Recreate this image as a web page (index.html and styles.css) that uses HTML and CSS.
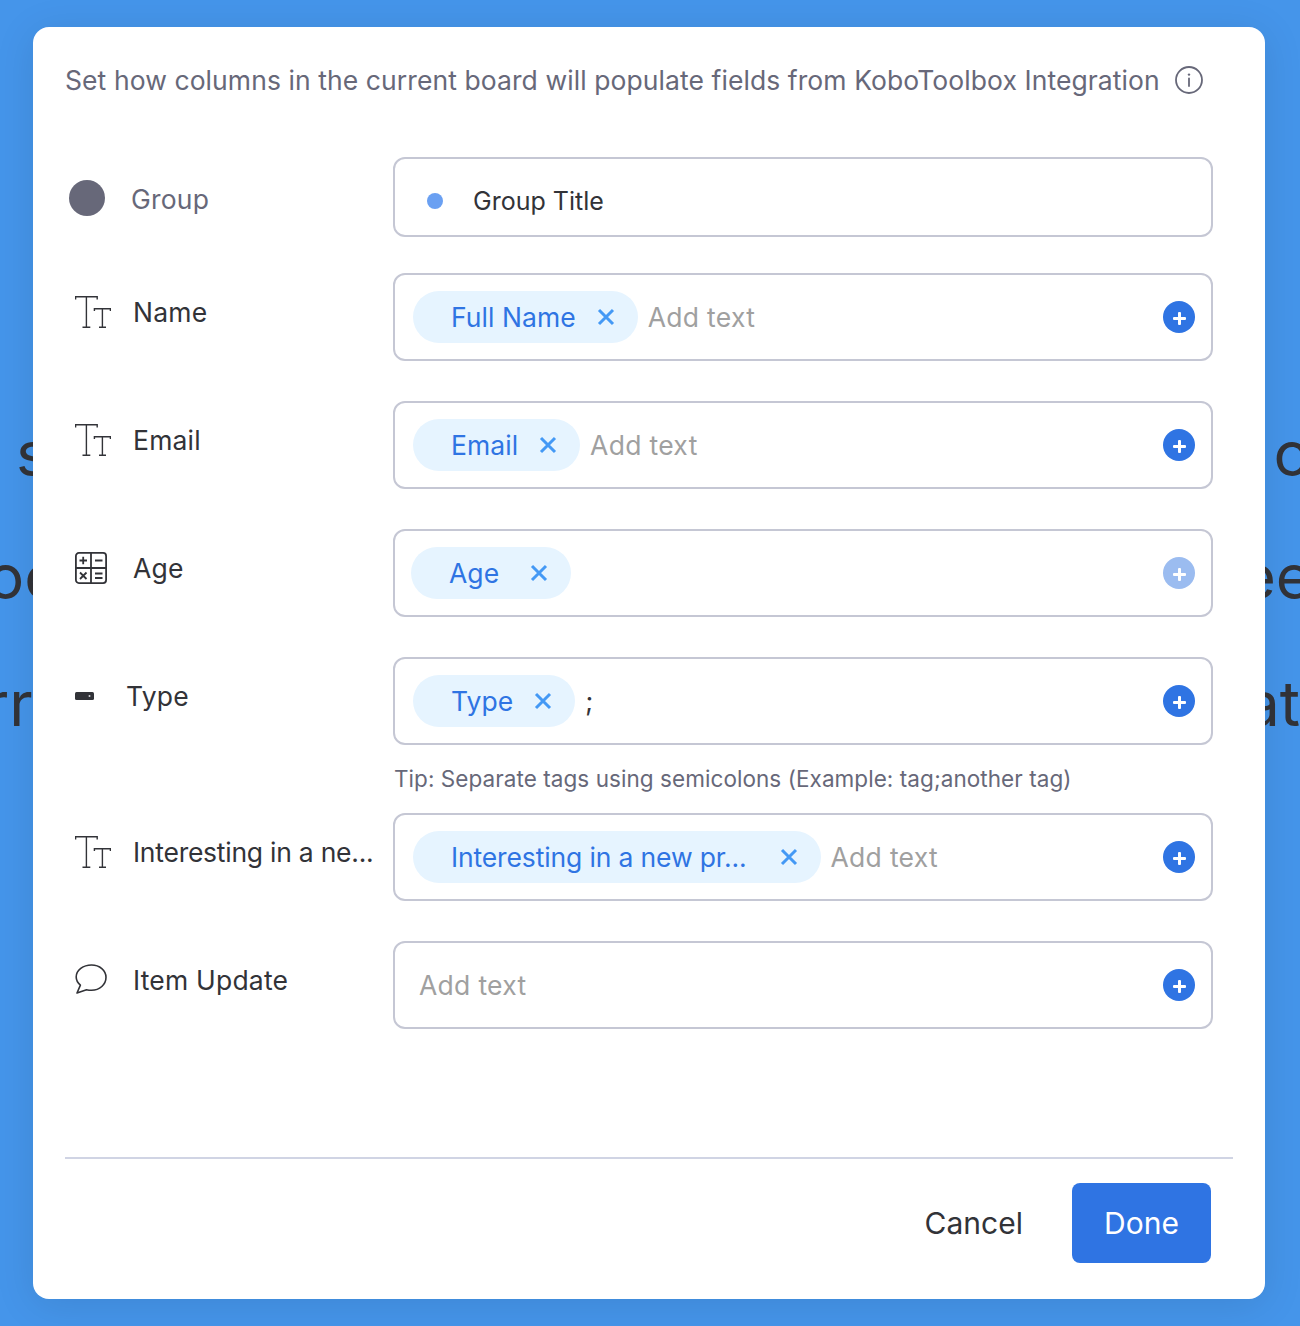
FILE: index.html
```html
<!DOCTYPE html>
<html lang="en">
<head>
<meta charset="utf-8">
<title>KoboToolbox Integration</title>
<link rel="stylesheet" href="styles.css">
</head>
<body>
<div class="backdrop">
  <div class="bg-line bg-line-1"><span class="bg-l">s</span><span class="bg-r">c</span></div>
  <div class="bg-line bg-line-2"><span class="bg-l">oo</span><span class="bg-r">ee</span></div>
  <div class="bg-line bg-line-3"><span class="bg-l">rr</span><span class="bg-r">at</span></div>
</div>
<main class="modal">
  <header class="head">
    <p class="title">Set how columns in the current board will populate fields from KoboToolbox Integration</p>
    <svg class="info" viewBox="0 0 28 28"><circle cx="14" cy="14" r="13" fill="none" stroke="#676879" stroke-width="1.8"/><circle cx="14" cy="8.6" r="1.2" fill="#676879"/><path d="M14 12.5v7.5" stroke="#676879" stroke-width="1.8" stroke-linecap="round"/></svg>
  </header>
  <section class="rows">
    <div class="row row-group">
      <div class="label label-group"><span class="group-dot"></span><span class="group-text">Group</span></div>
      <div class="field field-group"><span class="blue-dot"></span><span class="group-title">Group Title</span></div>
    </div>
    <div class="row">
      <div class="label"><svg class="ic ic-tt" viewBox="0 0 36 32"><path d="M.6 3.5V.7h21.6v2.8M11.4.7v30.6M7.5 31.3h7.8M19.4 15V12.7h16v2.3M27.4 12.7v18.6M24 31.3h7" fill="none" stroke="#323338" stroke-width="1.4"/></svg><span>Name</span></div>
      <div class="field"><span class="chip"><span class="chip-text">Full Name</span><svg class="x" viewBox="0 0 18 18"><path d="M2 2l14 14M16 2L2 16"/></svg></span><span class="ph">Add text</span><span class="plus"></span></div>
    </div>
    <div class="row">
      <div class="label"><svg class="ic ic-tt" viewBox="0 0 36 32"><path d="M.6 3.5V.7h21.6v2.8M11.4.7v30.6M7.5 31.3h7.8M19.4 15V12.7h16v2.3M27.4 12.7v18.6M24 31.3h7" fill="none" stroke="#323338" stroke-width="1.4"/></svg><span>Email</span></div>
      <div class="field"><span class="chip"><span class="chip-text">Email</span><svg class="x" viewBox="0 0 18 18"><path d="M2 2l14 14M16 2L2 16"/></svg></span><span class="ph">Add text</span><span class="plus"></span></div>
    </div>
    <div class="row">
      <div class="label"><svg class="ic ic-calc" viewBox="0 0 32 32"><g fill="none" stroke="#323338" stroke-width="1.8"><rect x=".9" y=".9" width="30.2" height="30.2" rx="3"/><path d="M16 .9v30.200M.9 16h30.200"/><path d="M4.500 8.500h7.500M8.200 4.800v7.500M20 8.500h7.500M5 20.500l6.500 6.500M11.500 20.500L5 27M20 21.500h7.500M20 26h7.500"/></g></svg><span>Age</span></div>
      <div class="field field-age"><span class="chip"><span class="chip-text">Age</span><svg class="x x-age" viewBox="0 0 18 18"><path d="M2 2l14 14M16 2L2 16"/></svg></span><span class="plus plus-off"></span></div>
    </div>
    <div class="row">
      <div class="label"><svg class="ic ic-tag" viewBox="0 0 19 8"><rect width="19" height="8" rx="1.5" fill="#323338"/><circle cx="14.5" cy="4" r="1" fill="#d5d5dc"/></svg><span>Type</span></div>
      <div class="field-wrap">
        <div class="field"><span class="chip"><span class="chip-text">Type</span><svg class="x" viewBox="0 0 18 18"><path d="M2 2l14 14M16 2L2 16"/></svg></span><span class="semi">;</span><span class="plus"></span></div>
        <p class="tip">Tip: Separate tags using semicolons (Example: tag;another tag)</p>
      </div>
    </div>
    <div class="row row-tight">
      <div class="label"><svg class="ic ic-tt" viewBox="0 0 36 32"><path d="M.6 3.5V.7h21.6v2.8M11.4.7v30.6M7.5 31.3h7.8M19.4 15V12.7h16v2.3M27.4 12.7v18.6M24 31.3h7" fill="none" stroke="#323338" stroke-width="1.4"/></svg><span class="label-long">Interesting in a ne...</span></div>
      <div class="field"><span class="chip"><span class="chip-text chip-long">Interesting in a new pr...</span><svg class="x x-long" viewBox="0 0 18 18"><path d="M2 2l14 14M16 2L2 16"/></svg></span><span class="ph">Add text</span><span class="plus"></span></div>
    </div>
    <div class="row">
      <div class="label"><svg class="ic ic-chat" viewBox="0 0 32 30"><path d="M16.500 1C8.200 1 1.200 6.300 1.200 13c0 3.200 1.600 6 4.200 8.100L2 29l9.500-3.300c1.600.4 3.300.6 5 .6 8.200 0 14.500-5.800 14.500-13C31 6.300 24.700 1 16.500 1z" fill="none" stroke="#323338" stroke-width="1.600" stroke-linejoin="round"/></svg><span>Item Update</span></div>
      <div class="field field-empty"><span class="ph">Add text</span><span class="plus"></span></div>
    </div>
  </section>
  <footer class="foot">
    <button class="btn btn-cancel" type="button">Cancel</button>
    <button class="btn btn-done" type="button">Done</button>
  </footer>
</main>
</body>
</html>
```
FILE: styles.css
```css
* { box-sizing: border-box; }
html, body { margin: 0; height: 100%; }
body {
  position: relative;
  width: 1300px;
  height: 1326px;
  overflow: hidden;
  background: #4595ea;
  font-family: Inter, "Liberation Sans", sans-serif;
  color: #323338;
  padding: 27px 35px 27px 33px;
}
.backdrop { position: absolute; inset: 0; overflow: hidden; font-size: 62px; color: #323338; }
.bg-line { position: absolute; left: 0; right: 0; display: flex; justify-content: space-between; line-height: 80px; white-space: nowrap; }
.bg-line-1 { top: 414px; }
.bg-line-2 { top: 537px; }
.bg-line-3 { top: 664px; }
.bg-line-1 .bg-l { margin-left: 16px; }
.bg-line-1 .bg-r { margin-right: -9px; }
.bg-line-2 .bg-l { margin-left: -13px; }
.bg-line-2 .bg-r { margin-right: -12px; }
.bg-line-3 .bg-l { margin-left: -15px; }
.bg-line-3 .bg-r { margin-right: 0; }
.modal {
  position: relative;
  height: 1272px;
  background: #fff;
  border-radius: 16px;
  padding: 26px 32px 36px;
  display: flex;
  flex-direction: column;
  box-shadow: 0 6px 40px rgba(0, 0, 0, .1);
}
.head { display: flex; align-items: center; height: 54px; }
.title { margin: 0; font-size: 26.5px; color: #676879; white-space: nowrap; letter-spacing: .08px; }
.info { width: 28px; height: 28px; margin-left: 15px; flex: none; }
.rows { margin-top: 50px; display: flex; flex-direction: column; }
.row { display: grid; grid-template-columns: 328px 820px; margin-top: 40px; }
.row-group { margin-top: 0; }
.row-group + .row { margin-top: 36px; }
.row-tight { margin-top: 0; }
.label {
  display: flex;
  align-items: flex-start;
  padding: 23px 0 0 10px;
  font-size: 26.5px;
  line-height: 32px;
  letter-spacing: .2px;
  white-space: nowrap;
}
.label-long { letter-spacing: -.25px; }
.label-group { padding: 23px 0 0 4px; }
.group-dot { width: 36px; height: 36px; border-radius: 50%; background: #676879; flex: none; margin-right: 26px; }
.group-text { color: #676879; padding-top: 3px; }
.ic { flex: none; display: block; }
.ic-tt { width: 36px; height: 32px; margin-right: 22px; }
.ic-calc { width: 32px; height: 32px; margin: 0 26px 0 0; }
.ic-tag { width: 19px; height: 8px; margin: 12px 32px 0 0; }
.ic-chat { width: 32px; height: 30px; margin: 0 26px 0 0; }
.field {
  height: 88px;
  border: 2px solid #c5c7d4;
  border-radius: 12px;
  display: flex;
  align-items: center;
  padding: 0 16px 0 18px;
}
.field-group { height: 80px; padding: 8px 16px 0 32px; font-size: 25px; }
.field-age { padding-left: 16px; }
.field-empty { padding-left: 24px; }
.blue-dot { width: 16px; height: 16px; border-radius: 50%; background: #6aa0f2; margin-right: 30px; flex: none; }
.group-title { color: #323338; }
.chip {
  display: flex;
  align-items: center;
  height: 52px;
  border-radius: 26px;
  background: #e6f4ff;
  padding: 0 23px 0 38px;
  flex: none;
}
.chip-text { color: #2f74e3; font-size: 26.5px; letter-spacing: .05px; white-space: nowrap; }
.chip-long { letter-spacing: -.14px; }
.x { width: 18px; height: 18px; margin-left: 21px; flex: none; }
.x-long { margin-left: 33px; }
.x-age { margin-left: 31px; }
.x path { fill: none; stroke: #4499f5; stroke-width: 3; }
.ph { color: #a0a0a0; margin-left: 10px; font-size: 26.5px; letter-spacing: .3px; }
.field-empty .ph { margin-left: 0; }
.semi { margin-left: 10px; font-size: 26.5px; color: #323338; }
.plus {
  position: relative;
  margin-left: auto;
  width: 32px;
  height: 32px;
  border-radius: 50%;
  background: #2f74e3;
  flex: none;
}
.plus::before, .plus::after { content: ""; position: absolute; background: #fff; border-radius: 1px; }
.plus::before { left: 9.5px; top: 15.5px; width: 13px; height: 3px; }
.plus::after { left: 14.5px; top: 10.5px; width: 3px; height: 13px; }
.plus-off { background: #9bbcf0; }
.tip { margin: 18px 0 0 1px; height: 50px; font-size: 22.5px; line-height: 32px; color: #676879; letter-spacing: .06px; white-space: nowrap; }
.foot {
  margin-top: auto;
  border-top: 2px solid #d0d4e4;
  padding: 24px 22px 0 0;
  display: flex;
  justify-content: flex-end;
  align-items: center;
}
.btn { border: 0; font: inherit; font-size: 30px; background: none; height: 80px; cursor: pointer; }
.btn-cancel { color: #323338; margin-right: 49px; padding: 0; }
.btn-done { width: 139px; background: #2f74e3; color: #fff; border-radius: 8px; padding: 0; }
```
